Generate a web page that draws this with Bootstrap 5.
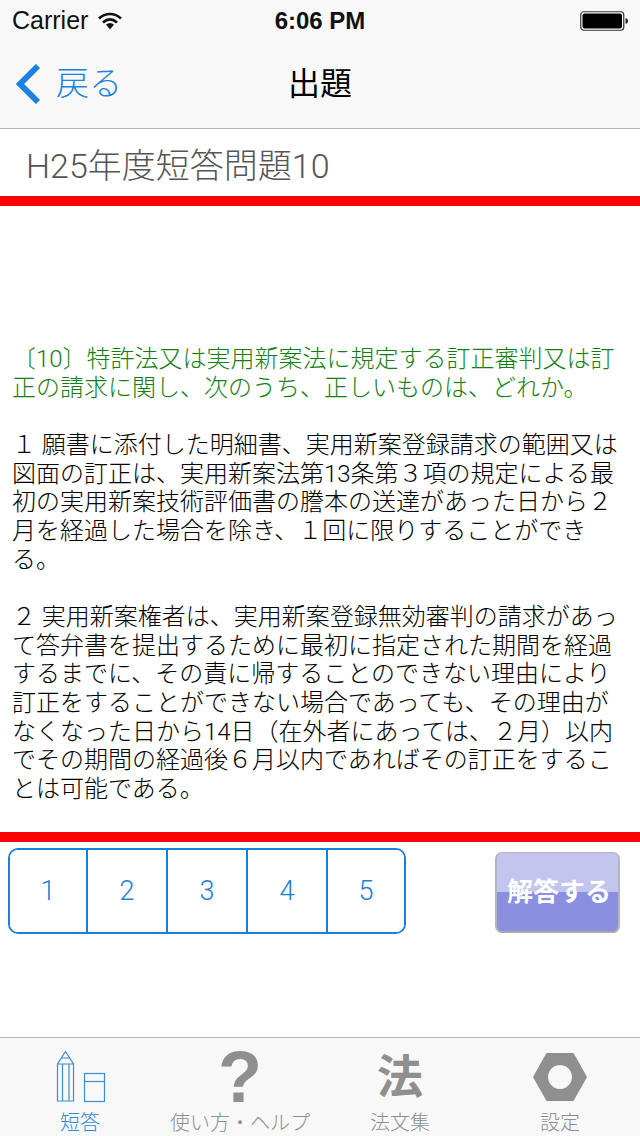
<!DOCTYPE html>
<html lang="ja">
<head>
<meta charset="utf-8">
<title>出題</title>
<link href="https://cdn.jsdelivr.net/npm/bootstrap@5.3.0/dist/css/bootstrap.min.css" rel="stylesheet">
<style>
html,body{height:1136px;overflow:hidden;background:#fff}
body{font-family:"Liberation Sans","Noto Sans CJK JP",sans-serif;color:#000}
.app-shell{height:1136px}
.top-chrome{background:#f8f8f8;border-bottom:1px solid #b4b4b4;height:129px}
.status-line{height:40px;padding:2px 12px 0;font-size:25px;color:#111}
.status-left{width:240px;gap:10px}
.status-time{font-weight:700;font-size:24px;color:#111;white-space:nowrap}
.status-right{width:240px}
.nav-line{height:88px;padding:0 15px}
.back-link{width:200px;color:#1b82e0;font-size:33px;gap:13px;text-decoration:none;font-weight:300}
.nav-title{font-size:32px;font-weight:400;color:#000}
.nav-spacer{width:200px}
.q-title{height:67px;padding-left:26px;font-family:Roboto,"Noto Sans CJK JP",sans-serif;font-size:34px;color:#555;line-height:75px;white-space:nowrap;font-weight:300}
.red-rule{height:10px;background:#f00;flex:none}
.q-body{height:626px;padding:139px 0 0 12px;font-family:Roboto,"Noto Sans CJK JP",sans-serif;font-size:24px;line-height:28.65px;color:#000;white-space:nowrap;font-weight:300}
.q-head{color:#148014}
.answer-bar{height:195px;padding:6px 20px 0 8px}
.seg-group{width:398px;height:86px;border:2px solid #1a7fdc;border-radius:10px;overflow:hidden}
.seg-cell{flex:0 0 80px;background:#fff;border:0;border-right:2px solid #1a7fdc;border-radius:0;color:#1a7fdc;font-family:Roboto,sans-serif;font-weight:300;font-size:27px;padding:0}
.seg-cell:first-child{flex:0 0 78px}
.seg-cell:last-child{border-right:0;flex:1 1 0}
.submit-btn{width:125px;height:81px;margin-top:4px;border:0;border-left:2px solid #b4b4ba;border-right:2px solid #b4b4ba;border-top:1px solid #b4b4ba;border-bottom:2px solid #a8a8b0;border-radius:7px;color:#fff;font-size:26px;font-weight:700;padding:0 0 0 3px;white-space:nowrap;background:linear-gradient(#c3c5ee 0,#c3c5ee 50%,#8a8fe0 50%,#8a8fe0 100%)}
.tab-strip{height:99px;background:#f8f8f8;border-top:1px solid #b4b4b4}
.tab-slot{width:160px;color:#8f8f8f;font-size:20px;line-height:24px}
.tab-slot.is-active{color:#2b8cd8}
.tab-pic{height:74px;padding-top:4px}
.tab-label{white-space:nowrap;margin-top:-1px;font-weight:300}
.tab-glyph{color:#8f8f8f;font-weight:700;line-height:70px}
.glyph-q{font-size:72px;font-family:"Liberation Sans",sans-serif}
.glyph-law{font-size:46px}
</style>
</head>
<body>
<div class="app-shell d-flex flex-column">
  <header class="top-chrome flex-none">
    <div class="status-line d-flex align-items-center justify-content-between">
      <div class="status-left d-flex align-items-center">
        <span>Carrier</span>
        <svg width="24" height="18" viewBox="0 0 24 18"><path d="M1 6.500C7.500 .5 16.500 .5 23 6.500" fill="none" stroke="#111" stroke-width="2.600"/><path d="M5 10.500C9.500 6.500 14.500 6.500 19 10.500" fill="none" stroke="#111" stroke-width="2.600"/><path d="M8 12.500C10.500 10.500 13.500 10.500 16 12.500L12 17.500Z" fill="#111"/></svg>
      </div>
      <span class="status-time">6:06 PM</span>
      <div class="status-right d-flex justify-content-end align-items-center">
        <svg width="48" height="20" viewBox="0 0 48 20"><rect x=".75" y=".75" width="43" height="18.500" rx="3" fill="#fff" stroke="#333" stroke-width="1.200"/><rect x="2.500" y="2.500" width="39.500" height="15" rx="2" fill="#000"/><path d="M45.500 7v6c1.500-.3 2.500-1.500 2.500-3s-1-2.700-2.500-3z" fill="#222"/></svg>
      </div>
    </div>
    <nav class="nav-line d-flex align-items-center justify-content-between">
      <a class="back-link d-flex align-items-center" href="#">
        <svg width="28" height="42" viewBox="0 0 28 42" class="flex-none"><path d="M23 3L5 21l18 18" fill="none" stroke="#1b82e0" stroke-width="6"/></svg>
        <span>戻る</span>
      </a>
      <span class="nav-title">出題</span>
      <span class="nav-spacer"></span>
    </nav>
  </header>
  <div class="q-title">H25年度短答問題10</div>
  <div class="red-rule"></div>
  <main class="q-body d-flex flex-column">
    <div class="q-head">〔10〕特許法又は実用新案法に規定する訂正審判又は訂<br>正の請求に関し、次のうち、正しいものは、どれか。</div>
    <div class="q-text"><br>１ 願書に添付した明細書、実用新案登録請求の範囲又は<br>図面の訂正は、実用新案法第13条第３項の規定による最<br>初の実用新案技術評価書の謄本の送達があった日から２<br>月を経過した場合を除き、１回に限りすることができ<br>る。<br><br>２ 実用新案権者は、実用新案登録無効審判の請求があっ<br>て答弁書を提出するために最初に指定された期間を経過<br>するまでに、その責に帰することのできない理由により<br>訂正をすることができない場合であっても、その理由が<br>なくなった日から14日（在外者にあっては、２月）以内<br>でその期間の経過後６月以内であればその訂正をするこ<br>とは可能である。</div>
  </main>
  <div class="red-rule"></div>
  <section class="answer-bar d-flex justify-content-between align-items-start">
    <div class="seg-group d-flex" role="group">
      <button type="button" class="btn seg-cell">1</button>
      <button type="button" class="btn seg-cell">2</button>
      <button type="button" class="btn seg-cell">3</button>
      <button type="button" class="btn seg-cell">4</button>
      <button type="button" class="btn seg-cell">5</button>
    </div>
    <button type="button" class="btn submit-btn">解答する</button>
  </section>
  <footer class="tab-strip d-flex">
    <div class="tab-slot is-active d-flex flex-column align-items-center">
      <div class="tab-pic d-flex align-items-center">
        <svg width="52" height="52" viewBox="0 0 52 52" fill="none" stroke="#3a8fcf" stroke-width="1.200"><path d="M3.500 50V13L11.500 .5 19.500 13V50ZM3.500 13H19.500M8.500 13V50M15 13V50M7.500 7h8"/><rect x="30.500" y="22.500" width="20" height="28"/><path d="M30.500 30.500h20"/></svg>
      </div>
      <div class="tab-label">短答</div>
    </div>
    <div class="tab-slot d-flex flex-column align-items-center">
      <div class="tab-pic tab-glyph glyph-q">?</div>
      <div class="tab-label">使い方・ヘルプ</div>
    </div>
    <div class="tab-slot d-flex flex-column align-items-center">
      <div class="tab-pic tab-glyph glyph-law">法</div>
      <div class="tab-label">法文集</div>
    </div>
    <div class="tab-slot d-flex flex-column align-items-center">
      <div class="tab-pic d-flex align-items-center">
        <svg width="54" height="48" viewBox="0 0 54 48"><path fill-rule="evenodd" fill="#8f8f8f" d="M13.500 0h27L54 24 40.500 48h-27L0 24ZM27 12a12 12 0 1 0 .01 0Z"/></svg>
      </div>
      <div class="tab-label">設定</div>
    </div>
  </footer>
</div>
<script src="https://cdn.jsdelivr.net/npm/bootstrap@5.3.0/dist/js/bootstrap.bundle.min.js"></script>
</body>
</html>
